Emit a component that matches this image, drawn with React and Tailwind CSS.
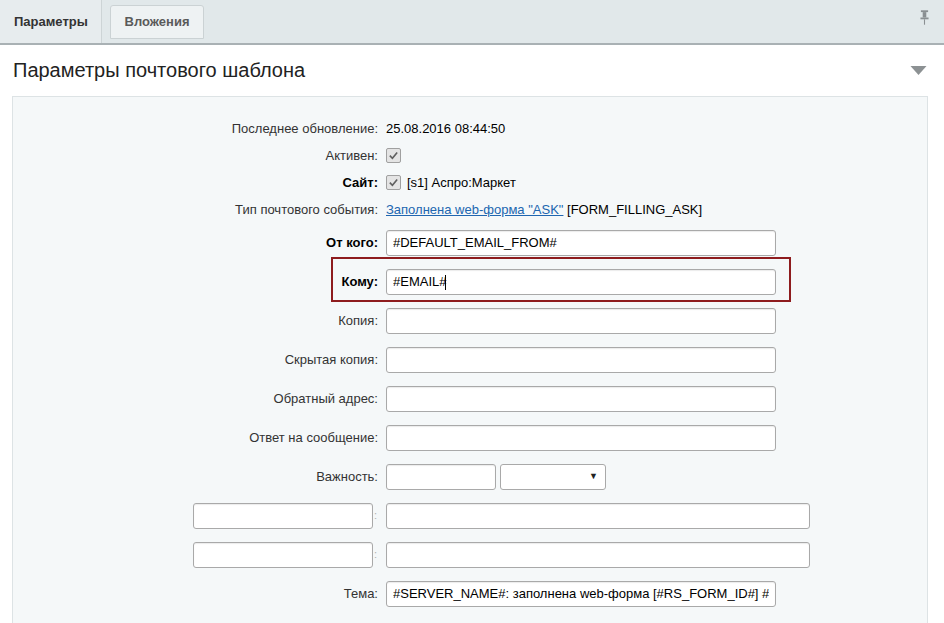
const inputCls =
  "h-[26px] rounded-[3px] border border-[#a9a9a9] bg-white px-[6px] text-[13px] text-[#000] shadow-[inset_0_1px_1px_rgba(0,0,0,0.08)] outline-none";

function Label({ children, bold }) {
  return (
    <div className={"text-right text-[13px] " + (bold ? "font-bold text-[#000]" : "text-[#333]")}>
      {children}
    </div>
  );
}

function Check() {
  return (
    <span className="inline-flex h-[15px] w-[15px] items-center justify-center rounded-[2px] border border-[#a0a0a0] bg-[#e4e4e4]">
      <svg viewBox="0 0 12 12" className="h-[11px] w-[11px]">
        <path d="M2 6.2 L4.8 9 L10 2.8" fill="none" stroke="#5f5f5f" strokeWidth="1.8" />
      </svg>
    </span>
  );
}

function TextRow({ label, bold, children }) {
  return (
    <div className="grid h-[27px] grid-cols-[365px_1fr] items-center gap-x-[8px]">
      <Label bold={bold}>{label}</Label>
      <div className="flex items-center gap-[6px] text-[13px] text-[#000]">{children}</div>
    </div>
  );
}

function InputRow({ label, bold, value = "", width = "w-[390px]", caret }) {
  return (
    <div className="grid h-[39px] grid-cols-[365px_1fr] items-center gap-x-[8px]">
      <Label bold={bold}>{label}</Label>
      <div className={"relative " + width}>
        <input readOnly value={value} className={inputCls + " w-full"} />
        {caret && <span className="absolute left-[59px] top-[6px] h-[15px] w-px bg-[#000]" />}
      </div>
    </div>
  );
}

function PairRow() {
  return (
    <div className="grid h-[39px] grid-cols-[365px_1fr] items-center gap-x-[8px]">
      <div className="flex items-center justify-end gap-[1px] pr-[1px]">
        <input readOnly className={inputCls + " w-[180px]"} />
        <span className="text-[11px] text-[#b0b0b0]">:</span>
      </div>
      <input readOnly className={inputCls + " w-[424px]"} />
    </div>
  );
}

export default function App() {
  return (
    <div className="min-h-[623px] bg-white font-['Liberation_Sans',Arial,sans-serif]">
      <div className="flex h-[45px] items-end border-b-2 border-[#a9b1b4] bg-[#e1e8ea]">
        <div className="flex h-full w-[102px] items-center border-r border-[#cdd4d6] bg-[#e7ecee] pl-[14px] text-[13px] font-bold text-[#333]">
          Параметры
        </div>
        <div className="ml-[8px] mb-[4px] flex h-[34px] w-[94px] items-center justify-center rounded-t-[3px] border border-[#cbd2d4] bg-[#eef2f3] text-[13px] font-bold text-[#5a5a5a]">
          Вложения
        </div>
        <div className="flex-1" />
        <div className="mb-[17px] mr-[15px]">
          <svg viewBox="0 0 10 18" className="h-[17px] w-[9px]">
            <rect x="1" y="1" width="8" height="2" fill="#8a8f92" />
            <rect x="3" y="3" width="4" height="6" fill="#8a8f92" />
            <rect x="0.5" y="9" width="9" height="2" fill="#8a8f92" />
            <rect x="4.4" y="11" width="1.2" height="6" fill="#8a8f92" />
          </svg>
        </div>
      </div>

      <div className="flex h-[51px] items-center justify-between pl-[13px] pr-[17px] pb-[2px]">
        <h1 className="text-[20px] font-normal text-[#222]">Параметры почтового шаблона</h1>
        <svg viewBox="0 0 16 9" className="mt-[2px] h-[9px] w-[17px]">
          <path d="M0 0 H16 L8 9 Z" fill="#8c9193" />
        </svg>
      </div>

      <div className="mx-[12px] w-[916px] border border-b-0 border-[#dde3e5] bg-[#f5f8f9] pt-[18px] pb-[20px]">
        <TextRow label="Последнее обновление:">25.08.2016 08:44:50</TextRow>
        <TextRow label="Активен:">
          <Check />
        </TextRow>
        <TextRow label="Сайт:" bold>
          <Check />
          <span>[s1] Аспро:Маркет</span>
        </TextRow>
        <TextRow label="Тип почтового события:">
          <span>
            <a href="#" className="text-[#2066b0] underline">
              Заполнена web-форма "ASK"
            </a>{" "}
            [FORM_FILLING_ASK]
          </span>
        </TextRow>

        <InputRow label="От кого:" bold value="#DEFAULT_EMAIL_FROM#" />
        <div className="relative">
          <InputRow label="Кому:" bold value="#EMAIL#" caret />
          <div className="pointer-events-none absolute left-[318px] top-[-5px] h-[45px] w-[460px] border-2 border-[#8e1c1e]" />
        </div>
        <InputRow label="Копия:" />
        <InputRow label="Скрытая копия:" />
        <InputRow label="Обратный адрес:" />
        <InputRow label="Ответ на сообщение:" />

        <div className="grid h-[39px] grid-cols-[365px_1fr] items-center gap-x-[8px]">
          <Label>Важность:</Label>
          <div className="flex items-center gap-[4px]">
            <input readOnly className={inputCls + " w-[110px]"} />
            <div className="flex h-[26px] w-[106px] items-center justify-end rounded-[3px] border border-[#a9a9a9] bg-white pr-[7px]">
              <span className="text-[9px] text-[#222]">▼</span>
            </div>
          </div>
        </div>

        <PairRow />
        <PairRow />

        <InputRow
          label="Тема:"
          value="#SERVER_NAME#: заполнена web-форма [#RS_FORM_ID#] #RS_FORM_NAME#"
        />
      </div>
    </div>
  );
}
